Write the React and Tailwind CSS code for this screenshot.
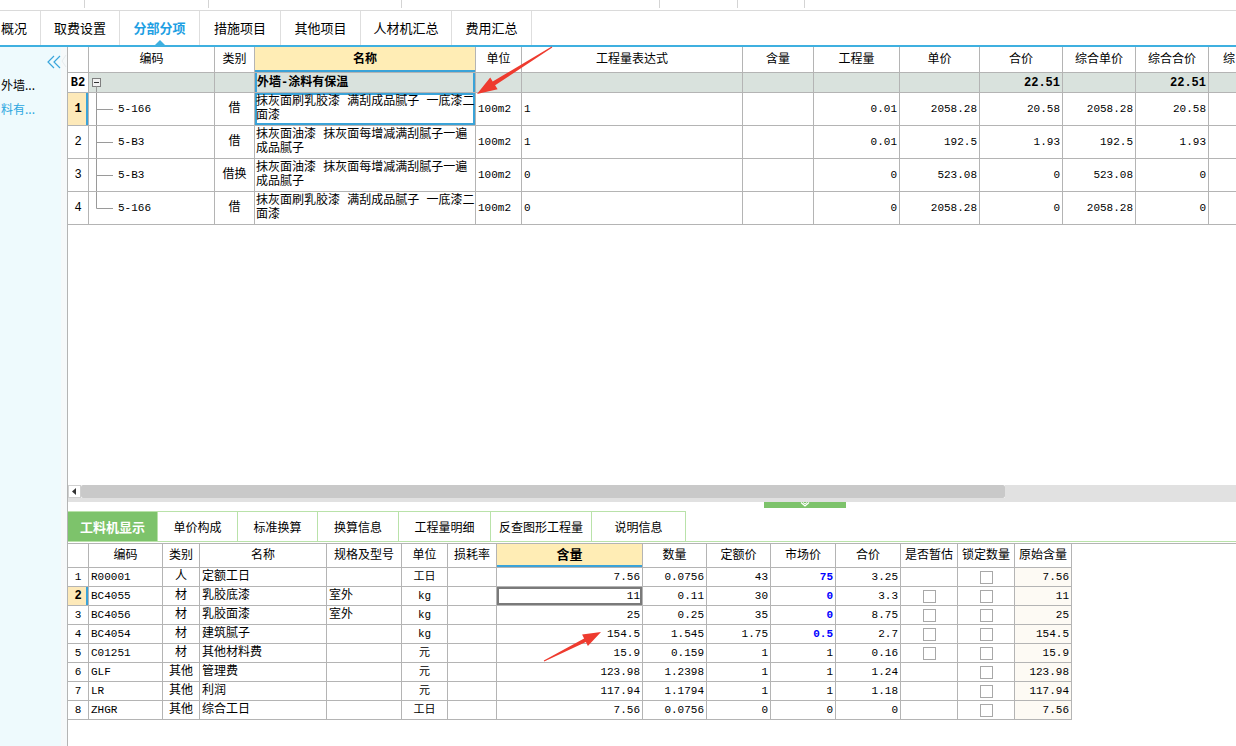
import React from "react";

const B = "border-r border-b border-[#b4b4b4]";
const GF = "font-['Liberation_Mono','Noto_Sans_CJK_SC',monospace]";

function C({ a = "c", className = "", children }) {
  const al = a === "c" ? "justify-center" : a === "r" ? "justify-end pr-[2px]" : "justify-start pl-[2px]";
  return (
    <div className={`${B} flex items-center overflow-hidden whitespace-nowrap ${al} ${className}`}>
      {children}
    </div>
  );
}

const UP = "grid grid-cols-[21px_126px_40px_221px_46px_221px_71px_86px_80px_83px_73px_73px_73px]";
const DN = "grid grid-cols-[21px_74px_37px_127px_75px_46px_49px_146px_64px_64px_65px_65px_57px_57px_57px]";

const upRows = [
  { n: "1", code: "5-166", t: "借", name: ["抹灰面刷乳胶漆 满刮成品腻子 一底漆二", "面漆"], expr: "1", q: "0.01", p: "2058.28", s: "20.58", cp: "2058.28", cs: "20.58", sel: true },
  { n: "2", code: "5-B3", t: "借", name: ["抹灰面油漆 抹灰面每增减满刮腻子一遍", "成品腻子"], expr: "1", q: "0.01", p: "192.5", s: "1.93", cp: "192.5", cs: "1.93" },
  { n: "3", code: "5-B3", t: "借换", name: ["抹灰面油漆 抹灰面每增减满刮腻子一遍", "成品腻子"], expr: "0", q: "0", p: "523.08", s: "0", cp: "523.08", cs: "0" },
  { n: "4", code: "5-166", t: "借", name: ["抹灰面刷乳胶漆 满刮成品腻子 一底漆二", "面漆"], expr: "0", q: "0", p: "2058.28", s: "0", cp: "2058.28", cs: "0", last: true },
];

const dnRows = [
  ["1", "R00001", "人", "定额工日", "", "工日", "", "7.56", "0.0756", "43", "75", "3.25", false, "7.56"],
  ["2", "BC4055", "材", "乳胶底漆", "室外", "kg", "", "11", "0.11", "30", "0", "3.3", true, "11"],
  ["3", "BC4056", "材", "乳胶面漆", "室外", "kg", "", "25", "0.25", "35", "0", "8.75", true, "25"],
  ["4", "BC4054", "材", "建筑腻子", "", "kg", "", "154.5", "1.545", "1.75", "0.5", "2.7", true, "154.5"],
  ["5", "C01251", "材", "其他材料费", "", "元", "", "15.9", "0.159", "1", "1", "0.16", true, "15.9"],
  ["6", "GLF", "其他", "管理费", "", "元", "", "123.98", "1.2398", "1", "1", "1.24", false, "123.98"],
  ["7", "LR", "其他", "利润", "", "元", "", "117.94", "1.1794", "1", "1", "1.18", false, "117.94"],
  ["8", "ZHGR", "其他", "综合工日", "", "工日", "", "7.56", "0.0756", "0", "0", "0", false, "7.56"],
];

function Box() {
  return <span className="block w-[13px] h-[13px] border border-[#a8a8a8] bg-white" />;
}

function Tree({ last }) {
  return (
    <svg width="28" height="32" className="shrink-0">
      <line x1="7.5" y1="0" x2="7.5" y2={last ? 16.5 : 32} stroke="#9a9a9a" />
      <line x1="7.5" y1="16.5" x2="24" y2="16.5" stroke="#9a9a9a" />
    </svg>
  );
}

const topTabs = [
  ["概况", "w-[41px] justify-start pl-[1px]"],
  ["取费设置", "w-[79px] justify-center"],
  ["分部分项", "w-[80px] justify-center"],
  ["措施项目", "w-[81px] justify-center"],
  ["其他项目", "w-[80px] justify-center"],
  ["人材机汇总", "w-[91px] justify-center"],
  ["费用汇总", "w-[80px] justify-center"],
];

const botTabs = [
  ["工料机显示", "w-[90px]"],
  ["单价构成", "w-[80px]"],
  ["标准换算", "w-[80px]"],
  ["换算信息", "w-[81px]"],
  ["工程量明细", "w-[92px]"],
  ["反查图形工程量", "w-[101px]"],
  ["说明信息", "w-[94px]"],
];

export default function App() {
  return (
    <div className="relative w-[1236px] h-[746px] overflow-hidden bg-white text-black font-['Noto_Sans_CJK_SC',sans-serif]">
      {/* top strip */}
      <div className="flex h-[11px] border-b border-[#dadada]">
        <div className="w-[85px] h-[8px] border-r border-[#d4d4d4]" />
        <div className="w-[124px] h-[8px] border-r border-[#d4d4d4]" />
        <div className="w-[193px] h-[8px] border-r border-[#d4d4d4]" />
        <div className="w-[258px] h-[8px] border-r border-[#d4d4d4]" />
        <div className="w-[78px] h-[8px] border-r border-[#d4d4d4]" />
        <div className="w-[67px] h-[8px] border-r border-[#d4d4d4]" />
      </div>

      {/* tabs */}
      <div className="flex h-[34px] text-[13px]">
        {topTabs.map(([t, cls]) => {
          const active = t === "分部分项";
          return (
            <div key={t} className={`relative flex items-center border-r border-[#dedede] ${cls} ${active ? "text-[#1e9fe3] font-bold" : ""}`}>
              {t}
              {active && (
                <span className="absolute bottom-0 left-1/2 -translate-x-1/2 w-0 h-0 border-l-[5px] border-r-[5px] border-b-[5px] border-l-transparent border-r-transparent border-b-[#3fb0e0]" />
              )}
            </div>
          );
        })}
      </div>
      <div className="h-[2px] bg-[#3fb0e0]" />

      {/* main */}
      <div className="flex h-[699px]">
        {/* sidebar */}
        <div className="w-[61px] bg-[#eefafd] flex flex-col text-[12px]">
          <div className="flex justify-end pr-0 pt-[8px]">
            <svg width="14" height="14">
              <polyline points="7,1 1,7 7,13" fill="none" stroke="#3aa6dc" strokeWidth="1.2" />
              <polyline points="13,1 7,7 13,13" fill="none" stroke="#3aa6dc" strokeWidth="1.2" />
            </svg>
          </div>
          <div className="mt-[8px] pl-[1px] leading-[16px]">外墙...</div>
          <div className="mt-[8px] pl-[1px] leading-[16px] text-[#2aa6e0]">料有...</div>
        </div>
        <div className="w-[6px] bg-[#f6f9fa] flex flex-col">
          <svg width="6" height="24" className="mt-[6px]">
            <polyline points="5,2 1,8 5,14" fill="none" stroke="#e6ecee" />
          </svg>
        </div>

        {/* right */}
        <div className="flex-1 min-w-0 flex flex-col border-l border-[#b4b4b4] overflow-hidden">
          {/* upper grid */}
          <div className={`h-[438px] overflow-hidden text-[12px] ${GF}`}>
            <div className={`${UP} h-[26px]`}>
              <C />
              <C>编码</C>
              <C>类别</C>
              <C className="bg-[#ffedb5] font-bold shadow-[inset_0_-2px_0_#3aa3d8]">名称</C>
              <C>单位</C>
              <C>工程量表达式</C>
              <C>含量</C>
              <C>工程量</C>
              <C>单价</C>
              <C>合价</C>
              <C>综合单价</C>
              <C>综合合价</C>
              <C a="l" className="!pl-[14px]">综</C>
            </div>
            <div className={`${UP} h-[20px] bg-[#d9e2dd]`}>
              <C className="bg-white font-bold">B2</C>
              <C a="l" className="!pl-0">
                <svg width="20" height="19" className="shrink-0">
                  <rect x="3.5" y="5.5" width="8" height="8" fill="#f2f2f2" stroke="#7f7f7f" />
                  <line x1="5" y1="9.5" x2="10" y2="9.5" stroke="#333" />
                  <line x1="7.5" y1="13.5" x2="7.5" y2="19" stroke="#9a9a9a" />
                </svg>
              </C>
              <C />
              <C a="l" className="font-bold shadow-[inset_2px_0_0_#3aa3d8,inset_-2px_0_0_#3aa3d8]">外墙-涂料有保温</C>
              <C />
              <C />
              <C />
              <C />
              <C />
              <C a="r" className="font-bold">22.51</C>
              <C />
              <C a="r" className="font-bold">22.51</C>
              <C />
            </div>
            {upRows.map((r) => (
              <div key={r.n} className={`${UP} h-[33px]`}>
                <C className={r.sel ? "bg-[#fde9b9] font-bold shadow-[inset_-2px_0_0_#3aa3d8]" : ""}>{r.n}</C>
                <div className={`${B} flex items-center overflow-hidden whitespace-nowrap text-[11px]`}>
                  <Tree last={r.last} />
                  <span className="ml-[1px]">{r.code}</span>
                </div>
                <C>{r.t}</C>
                <div className={`${B} flex flex-col justify-center pl-[1px] leading-[14px] overflow-hidden ${r.sel ? "shadow-[inset_0_0_0_2px_#3aa3d8]" : ""}`}>
                  <span className="whitespace-nowrap">{r.name[0]}</span>
                  <span className="whitespace-nowrap">{r.name[1]}</span>
                </div>
                <C a="l" className="text-[11px]">100m2</C>
                <C a="l" className="text-[11px]">{r.expr}</C>
                <C />
                <C a="r" className="text-[11px]">{r.q}</C>
                <C a="r" className="text-[11px]">{r.p}</C>
                <C a="r" className="text-[11px]">{r.s}</C>
                <C a="r" className="text-[11px]">{r.cp}</C>
                <C a="r" className="text-[11px]">{r.cs}</C>
                <C />
              </div>
            ))}
          </div>

          {/* scrollbar */}
          <div className="flex h-[13px]">
            <div className="w-[13px] bg-white border border-[#d0d0d0] flex items-center justify-center">
              <svg width="5" height="7">
                <polygon points="4,0 0,3.5 4,7" fill="#333" />
              </svg>
            </div>
            <div className="w-[924px] bg-[#c9c9c9] rounded-[2px]" />
            <div className="flex-1 bg-[#e1e1e1]" />
          </div>
          <div className="h-[4px] bg-[#e1e1e1]" />
          <div className="h-[6px] flex">
            <div className="ml-[696px] w-[82px] bg-[#7dc36b] flex justify-center">
              <svg width="10" height="6">
                <polyline points="1,0.5 5,4 9,0.5" fill="none" stroke="#fff" strokeWidth="1.2" />
                <polyline points="3,0.5 5,2 7,0.5" fill="none" stroke="#fff" strokeWidth="1" />
              </svg>
            </div>
          </div>
          <div className="h-[3px]" />

          {/* bottom tabs */}
          <div className="flex h-[31px] border-b border-[#b9e2a9] text-[12px]">
            {botTabs.map(([t, w], i) => {
              const active = i === 0;
              return (
                <div
                  key={t}
                  className={`${w} flex items-center justify-center border-t border-r border-[#b9e2a9] ${active ? "bg-[#7dc36b] text-white font-bold text-[13px]" : "bg-white"}`}
                >
                  {t}
                </div>
              );
            })}
          </div>
          <div className="h-[1px]" />

          {/* bottom grid */}
          <div className={`border-t border-[#b4b4b4] text-[12px] ${GF}`}>
            <div className={`${DN} h-[24px]`}>
              <C />
              <C>编码</C>
              <C>类别</C>
              <C>名称</C>
              <C>规格及型号</C>
              <C>单位</C>
              <C>损耗率</C>
              <C className="bg-[#ffedb5] font-bold text-[13px] shadow-[inset_0_-2px_0_#3aa3d8]">含量</C>
              <C>数量</C>
              <C>定额价</C>
              <C>市场价</C>
              <C>合价</C>
              <C>是否暂估</C>
              <C>锁定数量</C>
              <C>原始含量</C>
            </div>
            {dnRows.map((r, i) => (
              <div key={r[0]} className={`${DN} h-[19px]`}>
                <C className={i === 1 ? "bg-[#fde9b9] font-bold shadow-[inset_-2px_0_0_#3aa3d8]" : "text-[11px]"}>{r[0]}</C>
                <C a="l" className="text-[11px]">{r[1]}</C>
                <C>{r[2]}</C>
                <C a="l">{r[3]}</C>
                <C a="l">{r[4]}</C>
                <C className="text-[11px]">{r[5]}</C>
                <C />
                <C a="r" className={`text-[11px] ${i === 1 ? "shadow-[inset_0_0_0_2px_#7a7a7a]" : ""}`}>{r[7]}</C>
                <C a="r" className="text-[11px]">{r[8]}</C>
                <C a="r" className="text-[11px]">{r[9]}</C>
                <C a="r" className={`text-[11px] ${i < 4 ? "text-[#0000ff] font-bold" : ""}`}>{r[10]}</C>
                <C a="r" className="text-[11px]">{r[11]}</C>
                <C>{r[12] ? <Box /> : null}</C>
                <C>
                  <Box />
                </C>
                <C a="r" className="text-[11px] bg-[#fdfaf4]">{r[13]}</C>
              </div>
            ))}
          </div>
        </div>
      </div>

      {/* annotation arrows */}
      <svg className="absolute inset-0 pointer-events-none" width="1236" height="746">
        <polygon points="552.3,47.5 495.1,85.3 497.6,89.3 477,94 490.2,77.5 492.7,81.5 551.7,46.5" fill="#ee3b2f" />
        <polygon points="544.2,661.4 585.9,642.0 587.9,646.0 601,632 582.1,634.4 584.1,638.4 543.8,660.6" fill="#ee3b2f" />
      </svg>
    </div>
  );
}
